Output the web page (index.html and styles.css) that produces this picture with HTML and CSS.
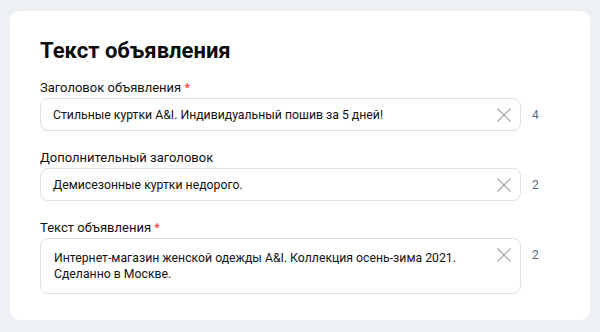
FILE: index.html
```html
<!DOCTYPE html>
<html lang="ru">
<head>
<meta charset="utf-8">
<link rel="stylesheet" href="styles.css">
</head>
<body>
<div class="card">
  <h1 class="title">Текст объявления</h1>

  <div class="field">
    <div class="label">Заголовок объявления <span class="req">*</span></div>
    <div class="row">
      <div class="box">
        <span class="value">Стильные куртки A&amp;I. Индивидуальный пошив за 5 дней!</span>
        <svg class="clear" width="14" height="14" viewBox="0 0 14 14"><path d="M0.5 0.5L13.5 13.5M13.5 0.5L0.5 13.5"/></svg>
      </div>
      <span class="count">4</span>
    </div>
  </div>

  <div class="field">
    <div class="label">Дополнительный заголовок</div>
    <div class="row">
      <div class="box">
        <span class="value">Демисезонные куртки недорого.</span>
        <svg class="clear" width="14" height="14" viewBox="0 0 14 14"><path d="M0.5 0.5L13.5 13.5M13.5 0.5L0.5 13.5"/></svg>
      </div>
      <span class="count">2</span>
    </div>
  </div>

  <div class="field">
    <div class="label">Текст объявления <span class="req">*</span></div>
    <div class="row row-top">
      <div class="box box-area">
        <span class="value">Интернет-магазин женской одежды A&amp;I. Коллекция осень-зима 2021.<br>Сделанно в Москве.</span>
        <svg class="clear" width="14" height="14" viewBox="0 0 14 14"><path d="M0.5 0.5L13.5 13.5M13.5 0.5L0.5 13.5"/></svg>
      </div>
      <span class="count count-top">2</span>
    </div>
  </div>
</div>
</body>
</html>
```

FILE: styles.css
```css
html, body {
  margin: 0;
  padding: 0;
}
body {
  background: #edf0f5;
  font-family: Roboto, "Noto Sans", "Liberation Sans", sans-serif;
  color: #111;
  width: 600px;
  height: 332px;
  overflow: hidden;
}
.card {
  margin: 11px 10px 0 10px;
  background: #fff;
  border-radius: 10px;
  padding: 26px 30px 0 30px;
  height: 309px;
  box-sizing: border-box;
}
.title {
  margin: 0 0 14px 0;
  font-size: 22px;
  line-height: 28px;
  font-weight: 700;
  color: #0d0d0d;
}
.field + .field {
  margin-top: 18px;
}
.label {
  font-size: 13px;
  line-height: 18px;
  margin-bottom: 1px;
  color: #111;
}
.req {
  color: #f33;
}
.row {
  display: flex;
  align-items: center;
  gap: 11px;
}
.row-top {
  align-items: flex-start;
}
.box {
  width: 481px;
  height: 33px;
  box-sizing: border-box;
  border: 1px solid #dddfe6;
  border-radius: 8px;
  padding: 1px 9px 0 12px;
  display: flex;
  align-items: center;
  justify-content: space-between;
}
.box-area {
  height: 56px;
  align-items: flex-start;
  padding-top: 11px;
  padding-left: 13px;
}
.value {
  font-size: 12.25px;
  line-height: 16px;
  color: #111;
}
.clear {
  flex: none;
}
.box-area .clear {
  margin-top: -2px;
}
.clear path {
  stroke: #a3a3a3;
  stroke-width: 1.1;
  fill: none;
}
.count {
  font-size: 12px;
  color: #5d6784;
}
.count-top {
  margin-top: 10px;
}
```
